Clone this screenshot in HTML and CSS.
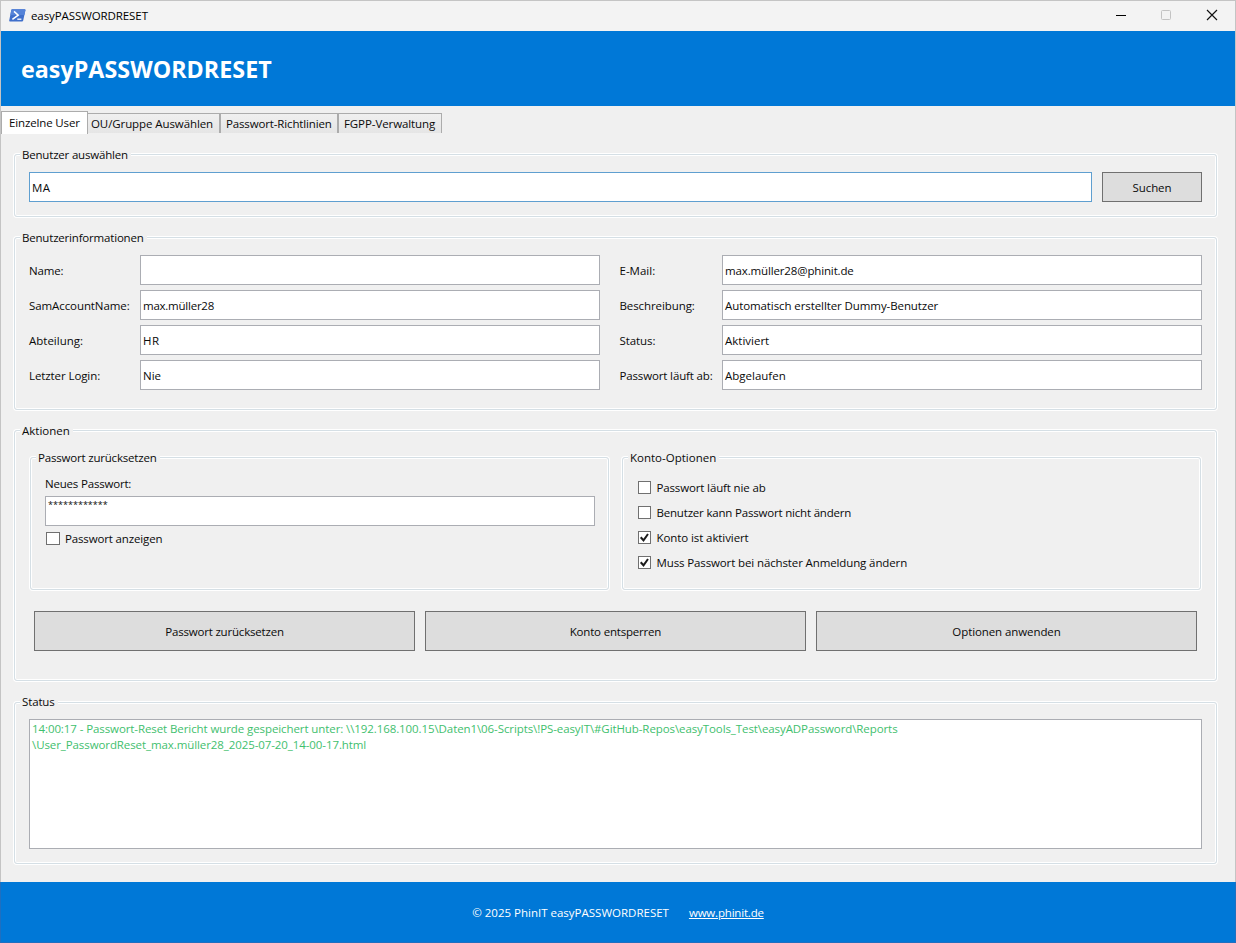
FILE: index.html
```
<!DOCTYPE html>
<html lang="de">
<head>
<meta charset="utf-8">
<title>easyPASSWORDRESET</title>
<link rel="stylesheet" href="styles.css">
</head>
<body>
<div class="window">
  <div class="titlebar">
    <svg class="app-icon" width="17" height="13" viewBox="0 0 17 13">
      <path d="M3.2.3H15.6Q16.6.3 16.4 1.3L14.2 11.6Q14 12.6 13 12.6H1Q0 12.6.2 11.6L2.3 1.1Q2.5.3 3.2.3Z" fill="#3f6fcb"/>
      <path d="M3.2.3H15.6Q16.6.3 16.4 1.3L15.4 6H1.4L2.3 1.1Q2.5.3 3.2.3Z" fill="#5583d8"/>
      <path d="M5 2.4L9.2 6.2L3.4 10.3" fill="none" stroke="#fff" stroke-width="1.5"/>
      <path d="M8.3 10.2H12.4" stroke="#fff" stroke-width="1.3"/>
    </svg>
    <span class="caption">easyPASSWORDRESET</span>
    <svg class="win-btn" width="12" height="12" viewBox="0 0 12 12"><path d="M1 6.5H11" stroke="#000"/></svg>
    <svg class="win-btn" width="12" height="12" viewBox="0 0 12 12"><rect x="1.5" y="1.5" width="9" height="9" rx="1" fill="none" stroke="#c3c3c3"/></svg>
    <svg class="win-btn close" width="12" height="12" viewBox="0 0 12 12"><path d="M1 1L11 11M11 1L1 11" stroke="#111" stroke-width="1.15"/></svg>
  </div>

  <header class="header"><h1>easyPASSWORDRESET</h1></header>

  <nav class="tabs">
    <div class="tab active tab-user snug">Einzelne User</div>
    <div class="tab tab-ou">OU/Gruppe Auswählen</div>
    <div class="tab tab-policy snug">Passwort-Richtlinien</div>
    <div class="tab tab-fgpp">FGPP-Verwaltung</div>
  </nav>

  <main class="content">
    <section class="group g-select">
      <h2 class="legend tight">Benutzer auswählen</h2>
      <div class="search">
        <div class="field focused"><span class="loosest">MA</span></div>
        <div class="button">Suchen</div>
      </div>
    </section>

    <section class="group g-info">
      <h2 class="legend tight">Benutzerinformationen</h2>
      <div class="info">
        <span class="tight">Name:</span><div class="field"></div>
        <span class="second loose">E-Mail:</span><div class="field snug">max.müller28@phinit.de</div>
        <span>SamAccountName:</span><div class="field tighter">max.müller28</div>
        <span class="second">Beschreibung:</span><div class="field">Automatisch erstellter Dummy-Benutzer</div>
        <span class="loose">Abteilung:</span><div class="field"><span class="loosest">HR</span></div>
        <span class="second">Status:</span><div class="field loose">Aktiviert</div>
        <span>Letzter Login:</span><div class="field loose">Nie</div>
        <span class="second snug">Passwort läuft ab:</span><div class="field loose">Abgelaufen</div>
      </div>
    </section>

    <section class="group g-actions">
      <h2 class="legend loose">Aktionen</h2>
      <div class="panels">
        <section class="group inner">
          <h2 class="legend tight">Passwort zurücksetzen</h2>
          <div class="password">
            <span class="tight">Neues Passwort:</span>
            <div class="field masked"><span>************</span></div>
            <div class="check"><i class="box wide"></i><span class="snug">Passwort anzeigen</span></div>
          </div>
        </section>
        <section class="group inner">
          <h2 class="legend loose">Konto-Optionen</h2>
          <div class="options">
            <div class="check"><i class="box"></i><span class="snug">Passwort läuft nie ab</span></div>
            <div class="check"><i class="box"></i><span class="tight">Benutzer kann Passwort nicht ändern</span></div>
            <div class="check"><i class="box"><svg width="11" height="11" viewBox="0 0 11 11"><path d="M1.7 5.3L4.5 8.3L9 2" fill="none" stroke="#1c1c1c" stroke-width="2"/></svg></i><span>Konto ist aktiviert</span></div>
            <div class="check"><i class="box"><svg width="11" height="11" viewBox="0 0 11 11"><path d="M1.7 5.3L4.5 8.3L9 2" fill="none" stroke="#1c1c1c" stroke-width="2"/></svg></i><span class="must">Muss Passwort bei nächster Anmeldung ändern</span></div>
          </div>
        </section>
      </div>
      <div class="buttons">
        <div class="button tight">Passwort zurücksetzen</div>
        <div class="button tight">Konto entsperren</div>
        <div class="button">Optionen anwenden</div>
      </div>
    </section>

    <section class="group g-status">
      <h2 class="legend snug">Status</h2>
      <div class="log">14:00:17 - Passwort-Reset Bericht wurde gespeichert unter: \\192.168.100.15\Daten1\06-Scripts\!PS-easyIT\#GitHub-Repos\easyTools_Test\easyADPassword\Reports<br>\User_PasswordReset_max.müller28_2025-07-20_14-00-17.html</div>
    </section>
  </main>

  <footer class="footer">
    <span class="loose">© 2025 PhinIT easyPASSWORDRESET</span>
    <a class="link tight">www.phinit.de</a>
  </footer>
</div>
</body>
</html>
```
FILE: styles.css
```
* { box-sizing: border-box; }

body {
  margin: 0;
  width: 1236px;
  height: 943px;
  overflow: hidden;
  font: 11.5px/16px "Open Sans", "Noto Sans", sans-serif;
  letter-spacing: -0.09px;
  color: #0a0a0a;
  white-space: nowrap;
}

.tighter { letter-spacing: -0.24px; }
.tight { letter-spacing: -0.19px; }
.snug { letter-spacing: -0.14px; }
.must { letter-spacing: -0.12px; }
.loose { letter-spacing: 0; }
.loosest { letter-spacing: 0.4px; }

.window {
  width: 1236px;
  height: 943px;
  display: flex;
  flex-direction: column;
  background: #f0f0f0;
  border: 1px solid #c4c4c4;
  border-bottom-color: #1f6fc0;
  border-image: linear-gradient(#c4c4c4 0 882px, #1f6fc0 882px) 1;
}

.titlebar {
  height: 30px;
  flex: none;
  display: flex;
  align-items: center;
  padding: 0 17px 2px 8px;
  background: #f3f3f3;
}
.app-icon { margin-right: 5px; }
.caption { flex: 1; padding-top: 1px; color: #000; }
.win-btn { display: block; }
.win-btn + .win-btn { margin-left: 33px; }
.win-btn + .close { margin-left: 34px; }

.header {
  height: 75px;
  flex: none;
  display: flex;
  align-items: center;
  padding: 0 0 0 20px;
  background: #0078d7;
}
.header h1 {
  margin: 0;
  font-size: 23.25px;
  line-height: 32px;
  font-weight: 700;
  letter-spacing: 0.04px;
  color: #fff;
}

.tabs {
  height: 28px;
  flex: none;
  display: flex;
  align-items: flex-end;
  padding-bottom: 1px;
}
.tab {
  height: 20px;
  border: 1px solid #acacac;
  border-bottom: 0;
  border-left-width: 0;
  background: linear-gradient(#f0f0f0, #e5e5e5);
  line-height: 20px;
}
.tab.active {
  height: 23px;
  margin-bottom: -1px;
  border-left-width: 1px;
  background: #fff;
  line-height: 22px;
}
.tab-user { width: 87px; padding-left: 7px; }
.tab-ou { width: 132px; padding-left: 3px; }
.tab-policy { width: 118px; padding-left: 5px; border-left-width: 1px; }
.tab-fgpp { width: 104px; padding-left: 5px; border-left-width: 1px; }

.content {
  flex: 1;
  display: flex;
  flex-direction: column;
  padding: 20px 18px 0 13px;
}

.group {
  border: 1px solid #d5dfe5;
  border-radius: 3px;
  box-shadow: 0 0 0 1px #fff, inset 0 0 0 1px #fff;
}
.legend {
  width: max-content;
  height: 16px;
  margin: -8px 0 0 5px;
  padding: 0 3px 0 2px;
  background: #f0f0f0;
  font-size: inherit;
  font-weight: 400;
}

.g-select { height: 63px; }
.g-info { height: 173px; margin-top: 20px; }
.g-actions { height: 251px; margin-top: 20px; }
.g-status { height: 162px; margin-top: 21px; }
.g-status .legend { line-height: 14px; }

.field {
  height: 30px;
  padding: 0 2px;
  border: 1px solid #abadb3;
  background: #fff;
  line-height: 30px;
}
.focused { border-color: #5f9fd0; }
.button {
  display: flex;
  align-items: center;
  justify-content: center;
  padding-top: 1px;
  border: 1px solid #707070;
  background: #ddd;
}

.search {
  display: grid;
  grid-template-columns: 1063px 100px;
  gap: 10px;
  padding: 9px 0 0 14px;
}

.info {
  display: grid;
  grid-template-columns: 111px 460px 122px 480px;
  grid-auto-rows: 30px;
  row-gap: 5px;
  padding: 9px 0 0 14px;
  line-height: 32px;
}
.info .second { padding-left: 19.5px; }

.panels {
  display: grid;
  grid-template-columns: 579px 579px;
  column-gap: 13px;
  padding: 18px 0 0 15px;
}
.inner { height: 133px; }
.password { padding: 10px 0 0 14px; }
.password > span { display: block; }
.password .field { width: 550px; margin-top: 4px; }
.masked { line-height: 14px; }
.masked span {
  display: inline-block;
  font-size: 9.05px;
  letter-spacing: 0;
}
.check {
  display: flex;
  align-items: center;
  height: 16px;
}
.password .check { padding-left: 1px; margin-top: 4px; }
.check span { padding-top: 1px; }
.box {
  display: block;
  width: 13px;
  height: 13px;
  margin-right: 5.5px;
  border: 1px solid #707070;
  background: #fff;
}
.box.wide { width: 14px; margin-right: 5px; }
.box svg { display: block; }
.options {
  display: grid;
  row-gap: 9px;
  padding: 13px 0 0 15px;
}

.buttons {
  display: grid;
  grid-template-columns: repeat(3, 381px);
  grid-auto-rows: 40px;
  column-gap: 10px;
  padding: 21px 0 0 19px;
}

.log {
  width: 1173px;
  height: 130px;
  margin: 8px 0 0 14px;
  padding: 1px 2px;
  border: 1px solid #abadb3;
  background: #fff;
  color: #3fc06e;
}

.footer {
  height: 60px;
  flex: none;
  display: flex;
  align-items: center;
  justify-content: center;
  gap: 20px;
  padding-top: 2px;
  background: #0078d7;
  color: #fff;
}
.link { color: #fff; text-decoration: underline; }
```
